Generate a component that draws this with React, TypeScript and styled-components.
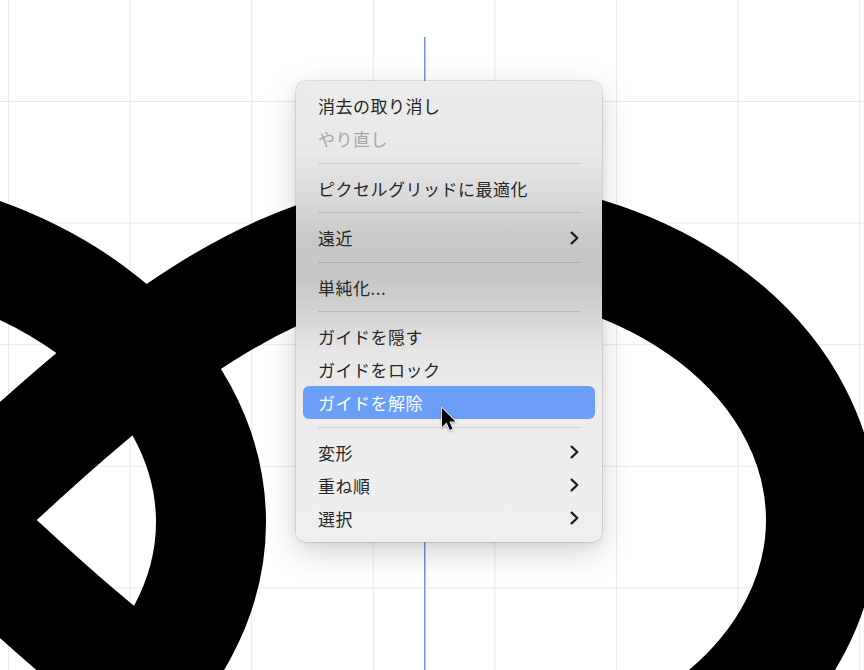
import React from "react";
import styled, { createGlobalStyle } from "styled-components";

const GlobalStyle = createGlobalStyle`
  html, body {
    margin: 0;
    padding: 0;
    background: #fff;
  }
  body {
    font-family: "Noto Sans CJK JP", "Noto Sans", sans-serif;
  }
`;

const Canvas = styled.main`
  position: relative;
  width: 864px;
  height: 670px;
  overflow: hidden;
  background-color: #fff;
  background-image: linear-gradient(to right, #e8e8e8 1px, transparent 1px),
    linear-gradient(to bottom, #e8e8e8 1px, transparent 1px);
  background-size: 121.6px 121.6px;
  background-position: 8px 101px;
`;

const Artwork = styled.svg`
  position: absolute;
  inset: 0;
  width: 864px;
  height: 670px;
  display: block;
`;

const Menu = styled.ul`
  position: absolute;
  left: 296px;
  top: 81px;
  width: 306px;
  box-sizing: border-box;
  margin: 0;
  padding: 8px 7px 7.5px;
  list-style: none;
  display: flex;
  flex-direction: column;
  border-radius: 10px;
  background: linear-gradient(
    to bottom,
    #ececec 0px,
    #e9e9e9 70px,
    #dadada 115px,
    #c9c9c9 155px,
    #c6c6c6 200px,
    #d5d5d5 235px,
    #e5e5e5 270px,
    #ececec 310px,
    #efefef 100%
  );
  box-shadow: 0 0 0 0.5px rgba(0, 0, 0, 0.18), 0 10px 32px rgba(0, 0, 0, 0.18),
    0 2px 6px rgba(0, 0, 0, 0.06);
`;

const Item = styled.li<{ $active?: boolean; $disabled?: boolean }>`
  height: 33px;
  display: flex;
  align-items: center;
  justify-content: space-between;
  padding: 0 16px 0 15px;
  border-radius: 6px;
  font-size: 17px;
  letter-spacing: 0.5px;
  white-space: nowrap;
  color: ${(p) => (p.$active ? "#fff" : p.$disabled ? "#a6a6a6" : "#262626")};
  background: ${(p) => (p.$active ? "#6b9ef6" : "transparent")};
`;

const Separator = styled.li`
  height: 16.5px;
  display: flex;
  align-items: center;
  padding: 0 15px;

  &::before {
    content: "";
    flex: 1;
    height: 1px;
    background: rgba(0, 0, 0, 0.12);
  }
`;

const Chevron = styled.svg`
  width: 9px;
  height: 14px;
  flex: none;
`;

const Pointer = styled.svg`
  position: absolute;
  left: 439.5px;
  top: 406px;
  width: 20px;
  height: 28px;
  filter: drop-shadow(0 1px 1px rgba(0, 0, 0, 0.3));
`;

type Entry =
  | { label: string; disabled?: boolean; active?: boolean; sub?: boolean }
  | "sep";

const entries: Entry[] = [
  { label: "消去の取り消し" },
  { label: "やり直し", disabled: true },
  "sep",
  { label: "ピクセルグリッドに最適化" },
  "sep",
  { label: "遠近", sub: true },
  "sep",
  { label: "単純化..." },
  "sep",
  { label: "ガイドを隠す" },
  { label: "ガイドをロック" },
  { label: "ガイドを解除", active: true },
  "sep",
  { label: "変形", sub: true },
  { label: "重ね順", sub: true },
  { label: "選択", sub: true },
];

function Arrow() {
  return (
    <Chevron viewBox="0 0 9 14">
      <path
        d="M1.6 1.6 L7.3 7 L1.6 12.4"
        fill="none"
        stroke="#1e1e1e"
        strokeWidth={2.2}
        strokeLinecap="round"
        strokeLinejoin="round"
      />
    </Chevron>
  );
}

export default function App() {
  return (
    <>
      <GlobalStyle />
      <Canvas>
        <Artwork viewBox="0 0 864 670">
          <path
            d="M-145 615 L-45 520 C135.6 348.4 275.5 234 451 234 A371 286 0 0 1 451 806 C275.5 806 135.6 691.6 -45 520 L-145 425"
            fill="none"
            stroke="#000"
            strokeWidth={112}
          />
          <ellipse
            cx={-200}
            cy={522}
            rx={411}
            ry={300}
            fill="none"
            stroke="#000"
            strokeWidth={110}
          />
          <line x1={424.75} y1={37} x2={424.75} y2={670} stroke="#7b8edc" strokeWidth={1.5} />
        </Artwork>
        <Menu>
          {entries.map((entry, index) =>
            entry === "sep" ? (
              <Separator key={index} />
            ) : (
              <Item
                key={index}
                $active={entry.active}
                $disabled={entry.disabled}
              >
                <span>{entry.label}</span>
                {entry.sub && <Arrow />}
              </Item>
            )
          )}
        </Menu>
        <Pointer viewBox="0 0 20 28">
          <path
            d="M2 2 L2 21 L6.6 16.6 L9.8 24 L12.5 22.8 L9.4 15.6 L15.5 15.6 Z"
            fill="#000"
            stroke="#fff"
            strokeWidth={1.5}
            strokeLinejoin="round"
            paintOrder="stroke"
          />
        </Pointer>
      </Canvas>
    </>
  );
}
